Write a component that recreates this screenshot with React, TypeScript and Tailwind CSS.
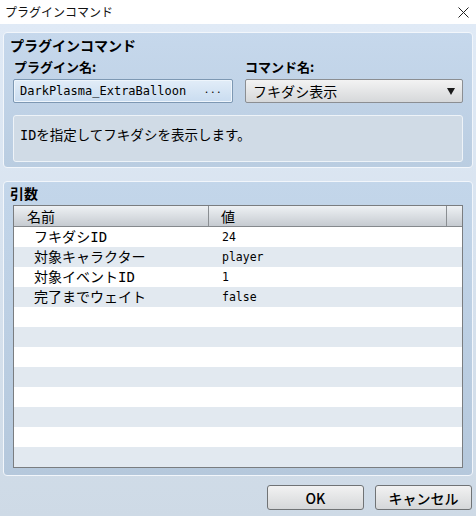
const jp = "font-['Noto_Sans_CJK_JP',sans-serif]";
const mono = "font-['DejaVu_Sans_Mono','Noto_Sans_CJK_JP',monospace]";

const args = [
	{ name: "フキダシID", value: "24" },
	{ name: "対象キャラクター", value: "player" },
	{ name: "対象イベントID", value: "1" },
	{ name: "完了までウェイト", value: "false" },
];

const rows = Array.from({ length: 12 }, (_, i) => args[i] ?? null);

export default function App() {
	return (
		<div className={`w-[476px] h-[516px] flex flex-col text-black ${jp}`}>
			{/* title bar */}
			<div className="h-[24px] bg-white flex items-center justify-between pl-[5px] pr-[7px] shrink-0">
				<span className="text-[12px] leading-[14px] text-[#111]">プラグインコマンド</span>
				<svg width="11" height="11" viewBox="0 0 11 11">
					<path d="M0.5 0.5 L10.5 10.5 M10.5 0.5 L0.5 10.5" stroke="#222" strokeWidth="1" />
				</svg>
			</div>

			{/* body */}
			<div className="flex-1 flex flex-col px-[3px] pt-[8px] bg-gradient-to-b from-[#e0eaf6] to-[#cedae6]">
				{/* plugin command group */}
				<div className="flex flex-col border border-[#f2f6fb] rounded-[4px] bg-gradient-to-b from-[#c6d8ec] to-[#bacde1] px-[9px] pt-[5px] pb-[5px]">
					<div className="text-[14px] leading-[14px] font-bold -ml-[3px]">プラグインコマンド</div>
					<div className="flex gap-[12px] mt-[8px]">
						<div className="w-[220px] text-[13px] leading-[14px] font-bold pl-[1px]">プラグイン名:</div>
						<div className="flex-1 text-[13px] leading-[14px] font-bold">コマンド名:</div>
					</div>
					<div className="flex gap-[12px] mt-[5px]">
						<div className="w-[220px] h-[24px] flex items-center justify-between border border-[#7d98b3] rounded-[2px] bg-gradient-to-b from-[#e2edf8] to-[#c9dcf0] pl-[6px] pr-[10px] shadow-[inset_0_0_0_1px_#eef5fc]">
							<span className={`${mono} text-[12px] leading-[14px]`}>DarkPlasma_ExtraBalloon</span>
							<span className="text-[11px] leading-[14px]">···</span>
						</div>
						<div className="flex-1 h-[24px] flex items-center justify-between border border-[#8b8e92] rounded-[2px] bg-gradient-to-b from-[#f3f3f3] to-[#d6d8da] pl-[7px] pr-[7px]">
							<span className="text-[14px] leading-[16px]">フキダシ表示</span>
							<svg width="8" height="7" viewBox="0 0 8 7">
								<path d="M0 0 H8 L4 7 Z" fill="#1a1a1a" />
							</svg>
						</div>
					</div>
					<div className="mt-[12px] h-[47px] border border-[#eef3f8] rounded-[3px] bg-[#d0dbe6] pl-[6px] pt-[5px]">
						<span className={`${mono} text-[13.5px] leading-[16px]`}>IDを指定してフキダシを表示します。</span>
					</div>
				</div>

				{/* arguments group */}
				<div className="mt-[13px] flex flex-col border border-[#f2f6fb] rounded-[4px] bg-gradient-to-b from-[#c3d6ea] to-[#b5c8dc] px-[9px] pt-[4px] pb-[7px]">
					<div className="text-[14px] leading-[14px] font-bold -ml-[3px]">引数</div>
					<div className="mt-[5px] border border-[#7a7d80] bg-white flex flex-col">
						<div className="h-[21px] flex border-b border-[#85898d] bg-gradient-to-b from-[#eef1f4] to-[#c6cbd1] text-[14px] leading-[16px]">
							<div className="w-[195px] border-r border-[#8a8e92] pl-[13px] flex items-center">名前</div>
							<div className="w-[238px] border-r border-[#8a8e92] pl-[12px] flex items-center">値</div>
							<div className="flex-1" />
						</div>
						{rows.map((r, i) => (
							<div key={i} className={`h-[20px] flex items-center ${i % 2 === 1 ? "bg-[#e2e9f0]" : "bg-white"}`}>
								<div className={`w-[196px] pl-[20px] text-[14px] leading-[16px] ${mono}`}>{r?.name}</div>
								<div className={`flex-1 pl-[12px] text-[11.5px] leading-[16px] ${mono}`}>{r?.value}</div>
							</div>
						))}
					</div>
				</div>

				{/* buttons */}
				<div className="mt-[9px] flex justify-end gap-[11px] pr-[1px]">
					<button className="w-[97px] h-[25px] border border-[#707375] rounded-[3px] bg-gradient-to-b from-[#f2f2f2] to-[#d5d7d9] text-[14px] leading-[16px] font-medium">OK</button>
					<button className="w-[97px] h-[25px] border border-[#707375] rounded-[3px] bg-gradient-to-b from-[#f2f2f2] to-[#d5d7d9] text-[14px] leading-[16px] font-medium">キャンセル</button>
				</div>
			</div>
		</div>
	);
}
